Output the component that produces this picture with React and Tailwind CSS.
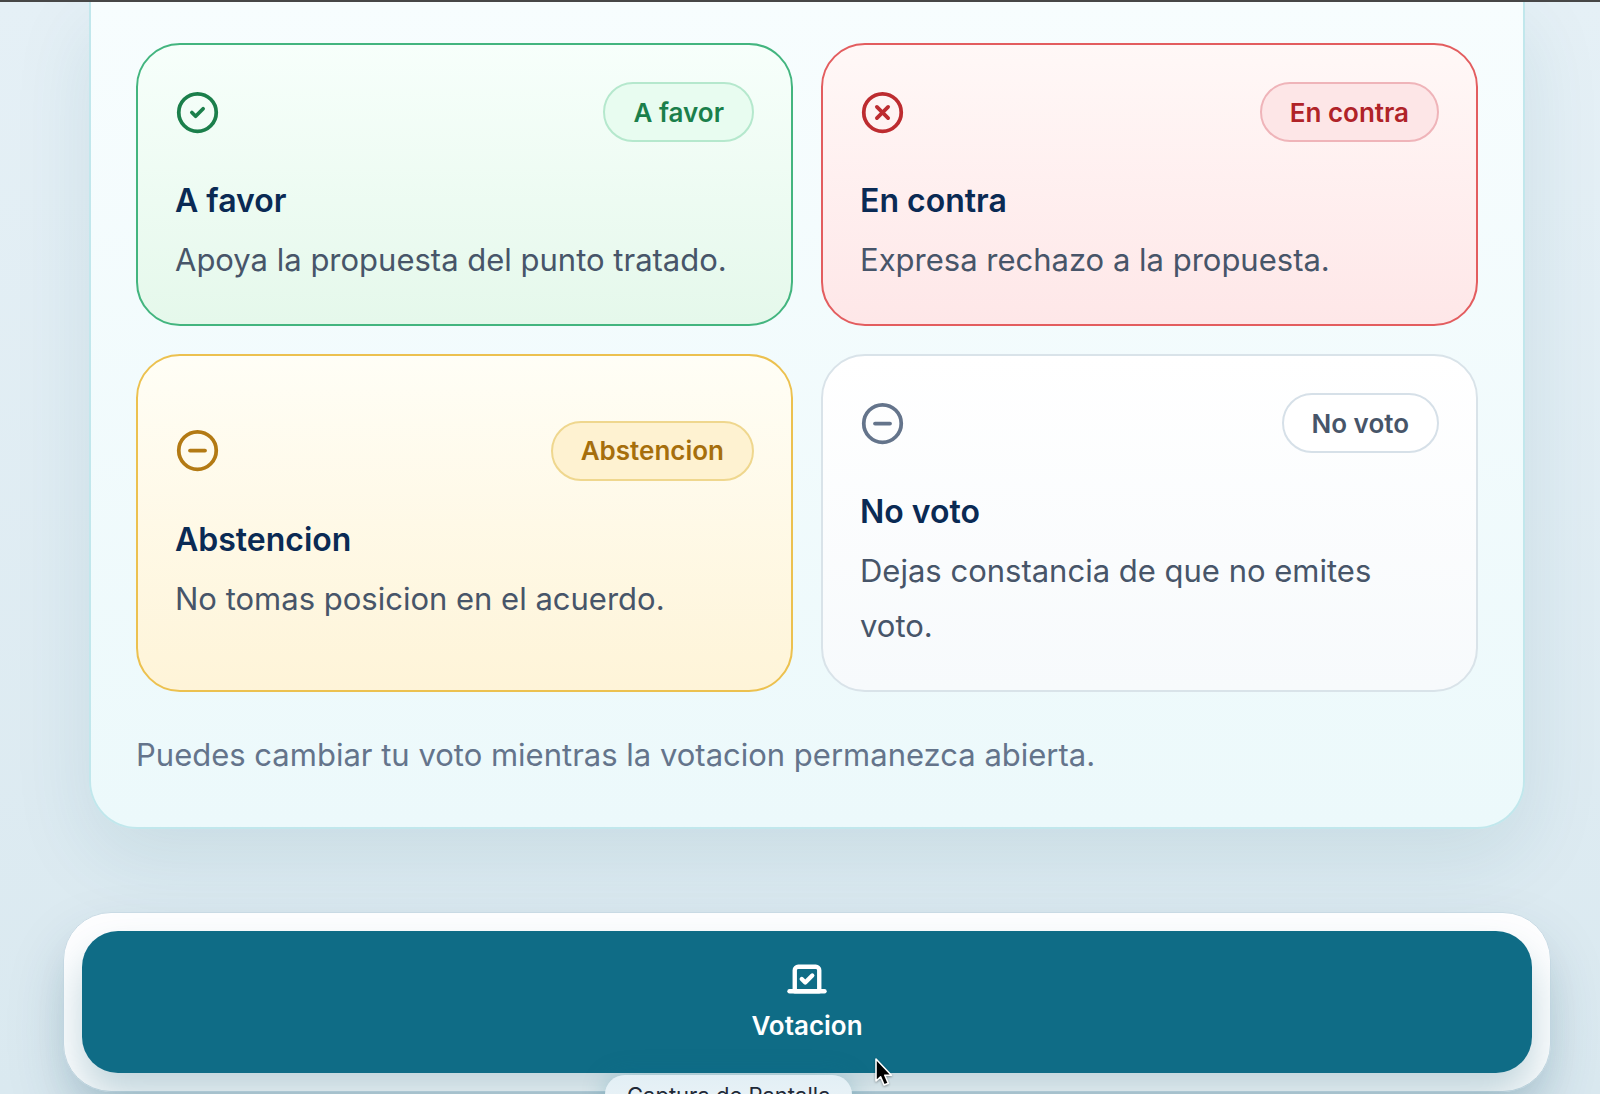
import { CircleCheck, CircleMinus, CircleX, Vote } from "lucide-react";

const options = [
  {
    label: "A favor",
    text: "Apoya la propuesta del punto tratado.",
    Icon: CircleCheck,
    card: "border-[#43b57f] from-[#f7fffb] to-[#e5f8eb]",
    icon: "text-[#1b7f4b]",
    pill: "border-[#b5e8cd] bg-[#e8fcf0] text-[#1b7f4b]",
  },
  {
    label: "En contra",
    text: "Expresa rechazo a la propuesta.",
    Icon: CircleX,
    card: "border-[#e35d5f] from-[#fff8f7] to-[#fee7e8]",
    icon: "text-[#bd2c30]",
    pill: "border-[#efb4b9] bg-[#fde6e7] text-[#b02328]",
  },
  {
    label: "Abstencion",
    text: "No tomas posicion en el acuerdo.",
    Icon: CircleMinus,
    card: "border-[#ecc14f] from-[#fffef6] to-[#fef4d8]",
    icon: "text-[#b37a14]",
    pill: "border-[#efd78e] bg-[#fef2d1] text-[#a66f0c]",
  },
  {
    label: "No voto",
    text: "Dejas constancia de que no emites voto.",
    Icon: CircleMinus,
    card: "border-[#d9e3e9] from-white to-[#f7fafc]",
    icon: "text-[#64748b]",
    pill: "border-[#d6e0e8] bg-white text-[#475569]",
  },
];

function OptionCard({ label, text, Icon, card, icon, pill }) {
  return (
    <button
      type="button"
      className={`flex flex-col justify-center rounded-[44px] border-2 bg-linear-to-b p-[37px] text-left ${card}`}
    >
      <span className="flex w-full items-center justify-between">
        <Icon size={45} strokeWidth={2} className={icon} aria-hidden="true" />
        <span className={`flex h-15 items-center rounded-full border-2 px-7 text-[26px] font-semibold ${pill}`}>
          {label}
        </span>
      </span>
      <span className="mt-9 text-[32px] leading-[46px] font-semibold text-[#0a2a54]">{label}</span>
      <span className="mt-2 text-[31px] leading-[55px] text-[#475569]">{text}</span>
    </button>
  );
}

function Pointer() {
  return (
    <svg
      className="pointer-events-none absolute bottom-[6px] left-[874px] h-[31px] w-[19px] drop-shadow-[0_1px_1px_rgba(0,0,0,0.35)]"
      viewBox="0 0 19 31"
      aria-hidden="true"
    >
      <path
        d="M2 2v22l4.600-4.200 3.500 8.200 4.200-1.800-3.500-8h6.600z"
        fill="#000"
        stroke="#fff"
        strokeWidth="1.600"
        strokeLinejoin="round"
      />
    </svg>
  );
}

export default function App() {
  return (
    <div className="relative h-screen overflow-hidden border-t-2 border-[#474747] bg-linear-to-b from-[#e5f0f6] to-[#dae9f0] font-['Inter',sans-serif]">
      <main className="pr-[49px] pl-[63px]">
        <section className="mx-[26px] rounded-b-[48px] border-2 border-t-0 border-[#c1e7ec] bg-linear-to-b from-[#f7fdfe] to-[#ecf9fb] px-[45px] pt-[41px] pb-[45px] shadow-[0_28px_80px_rgba(15,85,105,0.1)]">
          <div className="grid grid-cols-2 gap-7">
            {options.map((option) => (
              <OptionCard key={option.label} {...option} />
            ))}
          </div>
          <p className="mt-9 text-[31px] leading-[54px] text-[#64748b]">
            Puedes cambiar tu voto mientras la votacion permanezca abierta.
          </p>
        </section>

        <nav className="relative mt-[83px] rounded-[48px] border border-[#c9dbe5] bg-white/95 p-[18px] shadow-[0_28px_60px_rgba(15,60,90,0.15)]">
          <button
            type="button"
            className="flex h-[142px] w-full flex-col items-center justify-center gap-1.5 rounded-[36px] bg-[#0f6c86] text-white shadow-[0_24px_40px_rgba(15,90,115,0.25)]"
          >
            <Vote size={42} strokeWidth={2.5} aria-hidden="true" />
            <span className="text-[26px] leading-10 font-semibold">Votacion</span>
          </button>
        </nav>
      </main>

      <div className="absolute top-[1073px] left-[605px] rounded-[22px] bg-linear-to-b from-[#e2eff5] to-[#edf4f8] px-[22px] py-1 text-[22px] leading-8 text-[#1f2937] shadow-[0_0_24px_rgba(0,110,140,0.25)]">
        Captura de Pantalla
      </div>
      <Pointer />
    </div>
  );
}
